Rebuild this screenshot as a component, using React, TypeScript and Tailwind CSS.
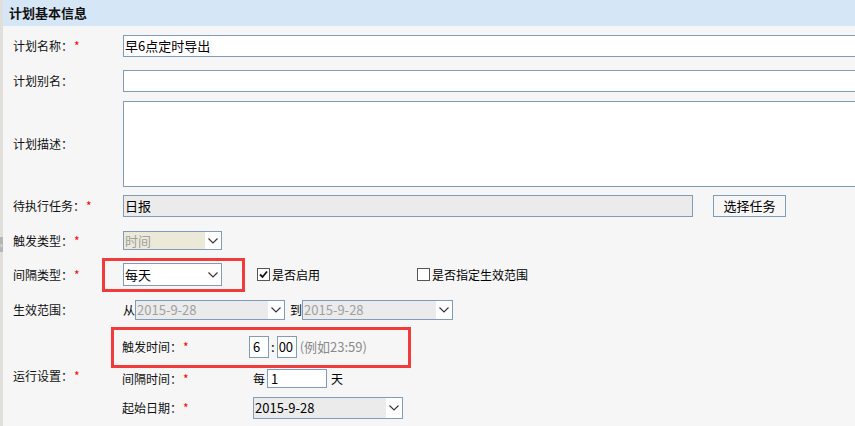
import type { ReactNode } from "react";

const font = "font-['Microsoft_YaHei','Noto_Sans_CJK_SC',sans-serif]";

const Star = () => <span className="ml-[1px] text-[#ff0000]">*</span>;

const Chevron = () => (
  <svg width="10" height="6" viewBox="0 0 10 6" className="text-[#333]">
    <polyline points="0.5,0.5 5,5 9.5,0.5" fill="none" stroke="currentColor" strokeWidth="1.1" />
  </svg>
);

interface SelectProps {
  value: string;
  width: string;
  height: string;
  fieldBg: string;
  textColor: string;
}

// fake native select: field part + white arrow box
const FakeSelect = ({ value, width, height, fieldBg, textColor }: SelectProps) => (
  <div className={`flex ${width} ${height} border border-[#7f9db9] bg-white`}>
    <div className={`flex flex-1 items-center pl-[1px] text-[13px] ${fieldBg} ${textColor}`}>{value}</div>
    <div className="flex w-[16px] items-center justify-center">
      <Chevron />
    </div>
  </div>
);

const Checkbox = ({ checked }: { checked?: boolean }) => (
  <div className="flex h-[13px] w-[13px] items-center justify-center border border-[#555] bg-white">
    {checked && (
      <svg width="9" height="9" viewBox="0 0 9 9">
        <polyline points="1,4.5 3.5,7 8,1.5" fill="none" stroke="#111" strokeWidth="1.8" />
      </svg>
    )}
  </div>
);

const Row = ({ label, star, h, children }: { label: string; star?: boolean; h: string; children?: ReactNode }) => (
  <div className={`flex ${h} items-center`}>
    <div className="w-[110px] shrink-0 text-[12px] text-[#111]">
      {label}
      {star && <Star />}
    </div>
    {children}
  </div>
);

const SubRow = ({ label, h, children }: { label: string; h: string; children?: ReactNode }) => (
  <div className={`flex ${h} items-center`}>
    <div className="w-[127px] shrink-0 text-[12px] text-[#111]">
      {label}
      <Star />
    </div>
    {children}
  </div>
);

export default function App() {
  return (
    <div className={`relative flex h-[426px] w-[855px] overflow-hidden bg-[#f6f6f6] ${font}`}>
      {/* left splitter strip */}
      <div className="relative w-[3px] shrink-0 bg-[#e0dfdb]">
        <div className="absolute left-0 top-[237px] flex h-[15px] w-[3px] items-center bg-[#b5b5b5]">
          <span className="text-[8px] leading-none text-white">›</span>
        </div>
      </div>

      <div className="flex min-w-0 flex-1 flex-col">
        <div className="flex h-[26px] items-center bg-[#d5e6f6] pl-[6px] text-[13px] font-bold text-[#111]">
          计划基本信息
        </div>

        <div className="flex flex-col pl-[10px]">
          <Row label="计划名称：" star h="h-[40px]">
            <div className="flex h-[22px] w-[760px] shrink-0 items-center border border-[#7f9db9] bg-white pl-[1px] text-[13px] text-black">
              早6点定时导出
            </div>
          </Row>
          <Row label="计划别名：" h="h-[30px]">
            <div className="h-[22px] w-[760px] shrink-0 border border-[#7f9db9] bg-white" />
          </Row>
          <Row label="计划描述：" h="h-[96px]">
            <div className="h-[86px] w-[760px] shrink-0 border border-[#7f9db9] bg-white" />
          </Row>
          <Row label="待执行任务：" star h="h-[28px]">
            <div className="flex h-[22px] w-[570px] items-center border border-[#7f9db9] bg-[#ebebeb] pl-[1px] text-[13px] text-black">
              日报
            </div>
            <button className="ml-[20px] flex h-[22px] w-[73px] items-center justify-center border border-[#7f9db9] bg-[#f6f6f6] text-[13px] text-black">
              选择任务
            </button>
          </Row>
          <Row label="触发类型：" star h="h-[41px]">
            <FakeSelect value="时间" width="w-[99px]" height="h-[19px]" fieldBg="bg-[#ece9d8]" textColor="text-[#a0a0a0]" />
          </Row>
          <Row label="间隔类型：" star h="h-[27px]">
            <FakeSelect value="每天" width="w-[99px]" height="h-[23px]" fieldBg="bg-white" textColor="text-black" />
            <div className="ml-[35px] flex items-center gap-[2px] text-[12px] text-black">
              <Checkbox checked />
              <span>是否启用</span>
            </div>
            <div className="ml-[97px] flex items-center gap-[2px] text-[12px] text-black">
              <Checkbox />
              <span>是否指定生效范围</span>
            </div>
          </Row>
          <Row label="生效范围：" h="h-[44px]">
            <span className="text-[12px] text-black">从</span>
            <FakeSelect value="2015-9-28" width="w-[150px]" height="h-[20px]" fieldBg="bg-[#ebebeb]" textColor="text-[#a0a0a0]" />
            <span className="ml-[5px] text-[12px] text-black">到</span>
            <FakeSelect value="2015-9-28" width="w-[151px]" height="h-[20px]" fieldBg="bg-[#ebebeb]" textColor="text-[#a0a0a0]" />
          </Row>

          {/* run settings: label spans three sub rows */}
          <div className="flex items-center">
            <div className="w-[109px] shrink-0 text-[12px] text-[#111]">
              运行设置：
              <Star />
            </div>
            <div className="flex flex-col">
              <SubRow label="触发时间：" h="h-[29px]">
                <div className="flex h-[22px] w-[20px] items-center border border-[#7f9db9] bg-white pl-[3px] text-[13px] text-black">
                  6
                </div>
                <span className="mx-[2px] text-[13px] text-black">:</span>
                <div className="flex h-[22px] w-[20px] items-center border border-[#7f9db9] bg-white pl-[1px] text-[13px] text-black">
                  00
                </div>
                <span className="ml-[3px] text-[13px] text-[#8a8a8a]">(例如23:59)</span>
              </SubRow>
              <SubRow label="间隔时间：" h="h-[35px]">
                <span className="ml-[4px] text-[12px] text-black">每</span>
                <div className="ml-[2px] flex h-[19px] w-[60px] items-center border border-[#7f9db9] bg-white pl-[3px] text-[13px] text-black">
                  1
                </div>
                <span className="ml-[4px] text-[12px] text-black">天</span>
              </SubRow>
              <SubRow label="起始日期：" h="h-[24px]">
                <div className="ml-[4px]">
                  <FakeSelect value="2015-9-28" width="w-[150px]" height="h-[22px]" fieldBg="bg-[#ebebeb]" textColor="text-black" />
                </div>
              </SubRow>
            </div>
          </div>
        </div>
      </div>

      {/* annotation boxes drawn over the form */}
      <div className="pointer-events-none absolute left-[102px] top-[258px] h-[34px] w-[143px] border-[3px] border-[#f23b3b]" />
      <div className="pointer-events-none absolute left-[111px] top-[327px] h-[41px] w-[300px] border-[3px] border-[#f23b3b]" />
    </div>
  );
}
